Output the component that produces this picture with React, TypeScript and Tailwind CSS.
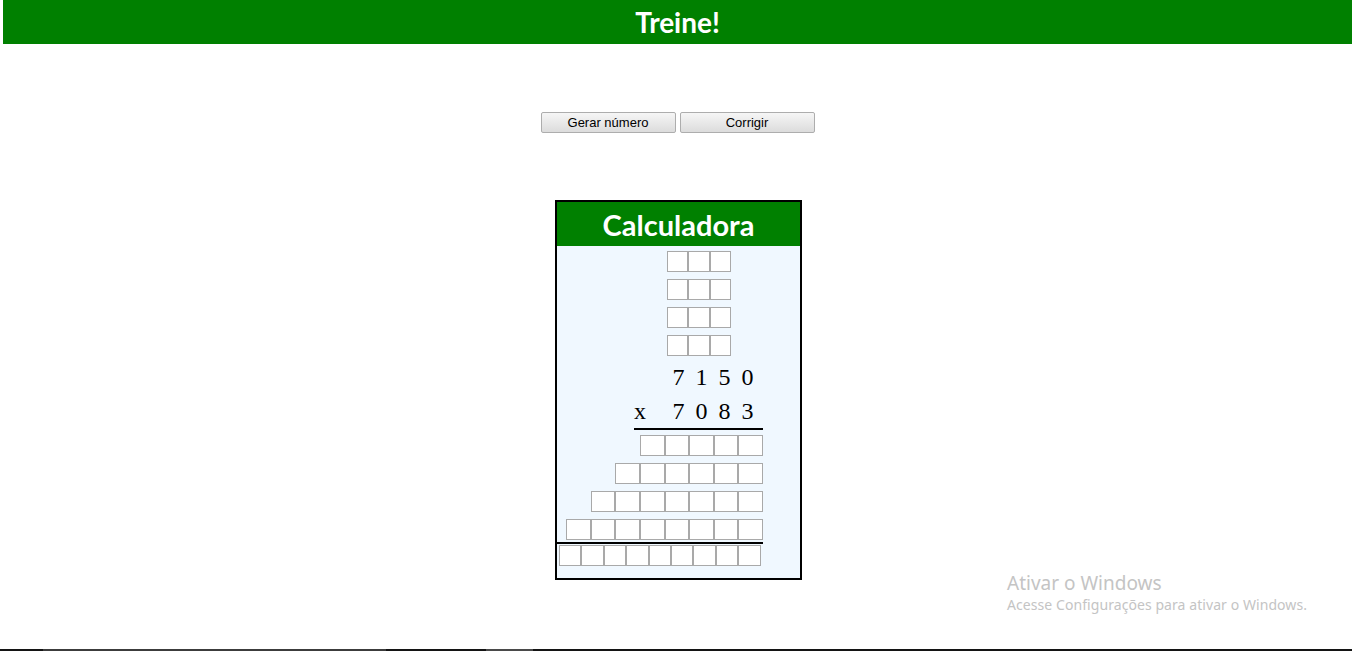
import React from "react";

const Box = ({ w }: { w: string }) => (
  <div className={`${w} h-[21px] shrink-0 border border-[#a9a9a9] bg-white`} />
);

const TopRow = () => (
  <div className="flex h-[21px] pl-[110px]">
    <div className="w-[21.33px] h-[21px] shrink-0 border border-[#a9a9a9] bg-white" />
    <div className="w-[21.33px] h-[21px] shrink-0 border border-[#a9a9a9] bg-white" />
    <div className="w-[21.33px] h-[21px] shrink-0 border border-[#a9a9a9] bg-white" />
  </div>
);

const ResultRow = ({ n }: { n: number }) => (
  <div className="flex w-[206px] justify-end h-[21px]">
    {Array.from({ length: n }).map((_, i) => (
      <div
        key={i}
        className="w-[24.6px] h-[21px] shrink-0 border border-[#a9a9a9] bg-white"
      />
    ))}
  </div>
);

const Digits = ({ d }: { d: string[] }) => (
  <div className="flex">
    {d.map((c, i) => (
      <div key={i} className="w-[23px] text-center">
        {c}
      </div>
    ))}
  </div>
);

export default function App() {
  return (
    <div className="relative min-h-[651px] bg-white pl-[3px] font-['Liberation_Sans',Arial,sans-serif]">
      <div className="flex h-[44px] items-center justify-center bg-[#008000]">
        <h1 className="font-['Comic_Sans_MS','Lato',sans-serif] text-[28px] font-bold leading-none text-white">
          Treine!
        </h1>
      </div>

      <div className="mt-[68px] flex justify-center gap-[4px]">
        <button className="h-[21px] w-[135px] rounded-[2px] border border-[#adadad] bg-gradient-to-b from-[#f6f6f6] to-[#dcdcdc] text-[13px] leading-none text-black">
          Gerar número
        </button>
        <button className="h-[21px] w-[135px] rounded-[2px] border border-[#adadad] bg-gradient-to-b from-[#f6f6f6] to-[#dcdcdc] text-[13px] leading-none text-black">
          Corrigir
        </button>
      </div>

      <div className="mt-[67px] flex justify-center pl-[2px]">
        <div className="w-[247px] border-2 border-black">
          <div className="flex h-[44px] items-center justify-center bg-[#008000]">
            <span className="font-['Comic_Sans_MS','Lato',sans-serif] text-[29px] font-bold leading-none text-white">
              Calculadora
            </span>
          </div>
          <div className="bg-[#f0f8ff] pt-[5px] pb-[12px]">
            <div className="flex flex-col gap-[7px]">
              <TopRow />
              <TopRow />
              <TopRow />
              <TopRow />
            </div>
            <div className="mt-[4px] font-['Liberation_Serif','Times_New_Roman',serif] text-[24px] text-black">
              <div className="flex h-[34px] items-center pl-[110px]">
                <Digits d={["7", "1", "5", "0"]} />
              </div>
              <div className="ml-[77px] flex h-[36px] w-[129px] items-center border-b-2 border-black">
                <div className="w-[12px] text-center">x</div>
                <div className="ml-[21px]">
                  <Digits d={["7", "0", "8", "3"]} />
                </div>
              </div>
            </div>
            <div className="mt-[5px] flex flex-col gap-[7px]">
              <ResultRow n={5} />
              <ResultRow n={6} />
              <ResultRow n={7} />
              <ResultRow n={8} />
            </div>
            <div className="mt-[2px] h-[2px] w-[206px] bg-black" />
            <div className="mt-[1px] flex pl-[2px]">
              {Array.from({ length: 9 }).map((_, i) => (
                <Box key={i} w="w-[22.4px]" />
              ))}
            </div>
          </div>
        </div>
      </div>

      <div className="pointer-events-none absolute left-[1007px] top-[571px] font-['Noto_Sans',sans-serif] text-[#c4c4c4]">
        <div className="text-[19px] leading-[24px]">Ativar o Windows</div>
        <div className="text-[14px] leading-[20px] tracking-[0.07px]">
          Acesse Configurações para ativar o Windows.
        </div>
      </div>

      <div className="absolute bottom-0 left-0 flex h-[2px] w-full bg-[#141414]">
        <div className="ml-[43px] h-full w-[343px] bg-[#3c3c3c]" />
        <div className="ml-[100px] h-full w-[47px] bg-[#4a4a4a]" />
      </div>
    </div>
  );
}
